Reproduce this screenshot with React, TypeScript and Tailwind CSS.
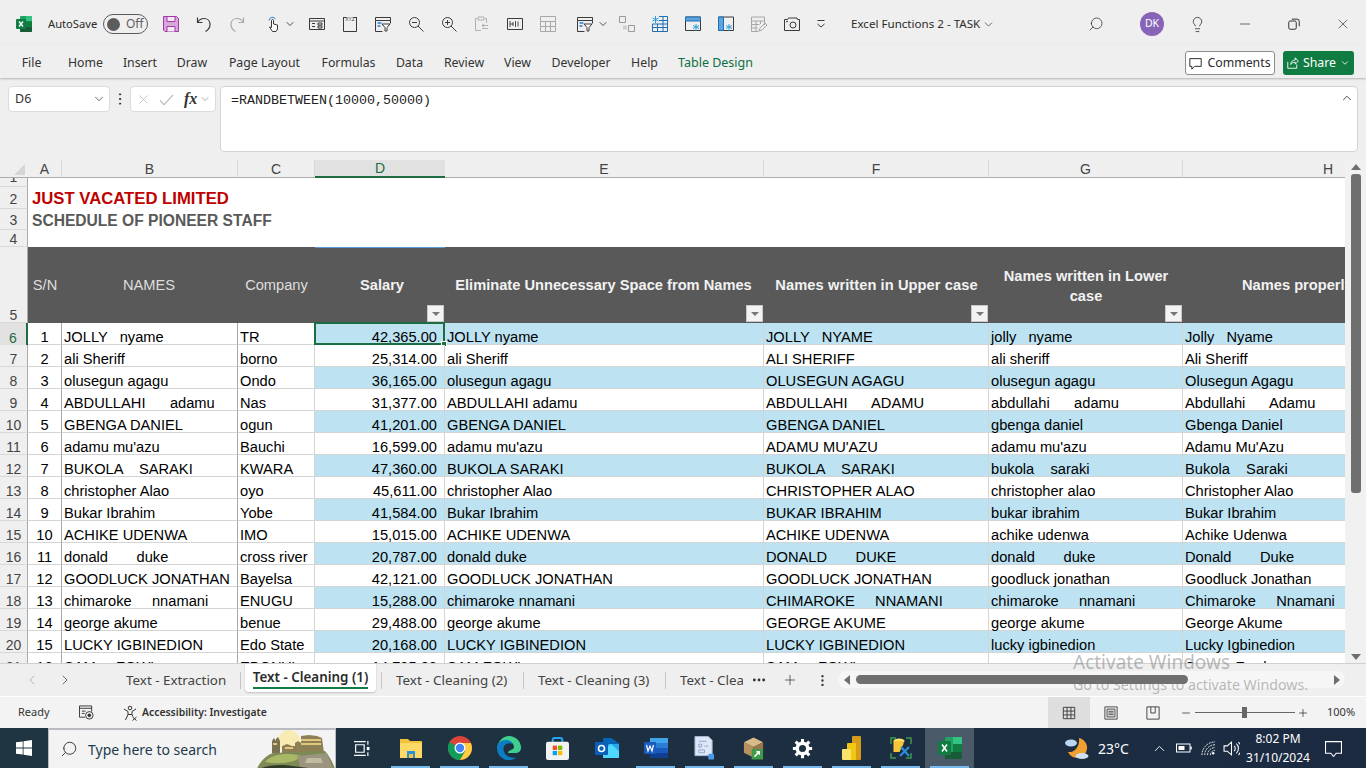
import { ReactNode } from "react";
import {
  ChevronDown,
  ChevronLeft,
  ChevronRight,
  ChevronUp,
  Lightbulb,
  Minus,
  MoreHorizontal,
  MoreVertical,
  Plus,
  Search,
  X,
} from "lucide-react";

const GRID_COLS = "grid grid-cols-[28px_34px_176px_77px_130px_319px_225px_194px_162px]";

const MENU = [
  { label: "File", w: "w-[45px]" },
  { label: "Home", w: "w-[63px]" },
  { label: "Insert", w: "w-[46px]" },
  { label: "Draw", w: "w-[58px]" },
  { label: "Page Layout", w: "w-[87px]" },
  { label: "Formulas", w: "w-[81px]" },
  { label: "Data", w: "w-[41px]" },
  { label: "Review", w: "w-[68px]" },
  { label: "View", w: "w-[39px]" },
  { label: "Developer", w: "w-[88px]" },
  { label: "Help", w: "w-[39px]" },
];

const ROWS: [string, string, string][] = [
  ["JOLLY   nyame", "TR", "42,365.00"],
  ["ali Sheriff", "borno", "25,314.00"],
  ["olusegun agagu", "Ondo", "36,165.00"],
  ["ABDULLAHI      adamu", "Nas", "31,377.00"],
  ["GBENGA DANIEL", "ogun", "41,201.00"],
  ["adamu mu'azu", "Bauchi", "16,599.00"],
  ["BUKOLA    SARAKI", "KWARA", "47,360.00"],
  ["christopher Alao", "oyo", "45,611.00"],
  ["Bukar Ibrahim", "Yobe", "41,584.00"],
  ["ACHIKE UDENWA", "IMO", "15,015.00"],
  ["donald       duke", "cross river", "20,787.00"],
  ["GOODLUCK JONATHAN", "Bayelsa", "42,121.00"],
  ["chimaroke     nnamani", "ENUGU", "15,288.00"],
  ["george akume", "benue", "29,488.00"],
  ["LUCKY IGBINEDION", "Edo State", "20,168.00"],
  ["SAM     FOWL", "EBONYI", "14,795.00"],
];

const proper = (s: string) =>
  s.toLowerCase().replace(/[a-z]+/g, (w) => w[0].toUpperCase() + w.slice(1));

function Ico({ children, className = "" }: { children: ReactNode; className?: string }) {
  return (
    <svg
      viewBox="0 0 16 16"
      fill="none"
      stroke="currentColor"
      strokeWidth="1"
      className={`w-4 h-4 shrink-0 ${className}`}
    >
      {children}
    </svg>
  );
}

function ExcelLogo() {
  return (
    <svg viewBox="0 0 16 16" className="w-4 h-4 shrink-0">
      <rect x="4" y="0" width="12" height="16" rx="1" fill="#21a366" />
      <rect x="10" y="0" width="6" height="5.3" fill="#33c481" />
      <rect x="10" y="5.3" width="6" height="5.4" fill="#107c41" />
      <rect x="4" y="10.7" width="12" height="5.3" rx="1" fill="#185c37" />
      <rect x="0" y="3" width="10" height="10" rx="1" fill="#107c41" />
      <path d="M3 5.5l4 5M7 5.5l-4 5" stroke="#fff" strokeWidth="1.4" />
    </svg>
  );
}

function FilterIcon() {
  return (
    <Ico>
      <path d="M.5 1.5h15v3H.5zM.5 4.5v11h7M15.500 4.500v3" />
      <path d="M7 8h8l-3 3.500v3.500h-2v-3.500z" fill="#fff" />
      <path d="M2.500 7h4M2.500 10h3" stroke="#2b7cd3" strokeWidth="1.500" />
    </Ico>
  );
}

function QuickAccess() {
  return (
    <div className="flex items-center gap-[17px] text-[#3a3a3a]">
      <Ico className="text-[#a13aa8]">
        <path d="M.5.5h13l2 2v13H2l-1.500-1.500z" fill="#d6a7d8" />
        <path d="M4 .5h8v5H4zM4 15.500v-5h8v5" fill="#f4e8f5" />
      </Ico>
      <Ico>
        <path d="M1.500 1.500v5h5M1.500 6.500C3 4 5 2.500 8 2.500c3.500 0 6 2.500 6 6 0 3-2 5.500-4.500 7" strokeWidth="1.200" />
      </Ico>
      <Ico className="text-[#a8a8a8]">
        <path d="M14.500 1.500v5h-5M14.500 6.500C13 4 11 2.500 8 2.500c-3.500 0-6 2.500-6 6 0 3 2 5.500 4.500 7" strokeWidth="1.200" />
      </Ico>
      <div className="ml-[4px] -mr-[4px] flex items-center gap-[2px]">
        <Ico>
          <path d="M3 4.500a3.500 3.500 0 0 1 6.500-1.500" stroke="#2b7cd3" />
          <path d="M5.500 10V4.500a1 1 0 0 1 2 0V8l4 1v4l-1.500 2.500H6.500L3.500 11l2 .5z" fill="#fff" />
        </Ico>
        <ChevronDown className="w-3 h-3" strokeWidth={1.75} />
      </div>
      <Ico>
        <path d="M.5 2.500h15v11H.5zM.5 5h15M3 7.500h3M3 10.500h3M9 7h4v2H9zM9 10h4v2H9z" />
      </Ico>
      <Ico>
        <path d="M1.500 1.500h3M11.500 1.500h3M1.500 1v14.500h13V1" />
        <text x="8" y="5" fontSize="5" textAnchor="middle" fill="currentColor" stroke="none" fontFamily="Liberation Sans">
          XYZ
        </text>
      </Ico>
      <FilterIcon />
      <Ico>
        <circle cx="6.500" cy="6.500" r="5" />
        <path d="M10 10l5.500 5.500M4 6.500h5" />
      </Ico>
      <Ico>
        <circle cx="6.500" cy="6.500" r="5" />
        <path d="M10 10l5.500 5.500M4 6.500h5M6.500 4v5" />
      </Ico>
      <Ico className="text-[#b0b0b0]">
        <path d="M3 2.500H1.500v12H7M11 2.500h1.500V7M4 1h6v3H4zM8 9.500h6M8 12.500h6M10 8l-2 1.500 2 1.500" />
      </Ico>
      <Ico>
        <path d="M.5 2.500h15v11H.5z" />
        <path d="M3 5v6M3 8h3.500M6 6v4M8.500 5v6M11 5.500v5" strokeWidth=".9" />
      </Ico>
      <Ico className="text-[#a8a8a8]">
        <path d="M.5.500h15v15H.5zM.5 5.500h15M.5 10.500h15M5.500 5.500v10M10.500 5.500v10" />
      </Ico>
      <div className="ml-[4px] -mr-[7px] flex items-center gap-[4px]">
        <FilterIcon />
        <ChevronDown className="w-3 h-3" strokeWidth={1.75} />
      </div>
      <Ico className="text-[#9a9a9a]">
        <path d="M.5.500h6v6h-6zM9.500 9.500h6v6h-6z" />
        <path d="M4 9.500h4v4H4z" fill="#d0d0d0" stroke="none" />
      </Ico>
      <Ico className="text-[#1f6fb5]">
        <path d="M.5 8h15v7.500H.5zM7 .5h8.500v15M7 4.500h8.500M11 .5v15M.5 11.500h15M5.500 8v7.500" />
        <path d="M3.500 0v7M.5 2l6 3M6.500 2l-6 3" stroke="#2b9ee0" />
      </Ico>
      <Ico className="text-[#3a3a3a]">
        <path d="M.5 1h15v13.500H.5z" />
        <path d="M.5 1h15v4H.5z" fill="#5ba3dc" stroke="#1f6fb5" />
        <path d="M11 8v7M8 9.500l6 3M14 9.500l-6 3" stroke="#2b9ee0" />
      </Ico>
      <Ico className="text-[#3a3a3a]">
        <path d="M.5 1h15v13.500H.5z" />
        <path d="M.5 1h5v13.500h-5z" fill="#5ba3dc" stroke="#1f6fb5" />
        <path d="M11 8v7M8 9.500l6 3M14 9.500l-6 3" stroke="#2b9ee0" />
      </Ico>
      <Ico className="text-[#a8a8a8]">
        <path d="M.5 1h13v8M.5 1v14.500h7M.5 5h13M.5 8.500h8M.5 12h6M5 5v10.500M9.500 5v3" />
        <path d="M8 15l1-3 5-5 2 2-5 5z" />
      </Ico>
      <Ico>
        <path d="M.5 3.500h3l1-1.500h8.500l.5 1.500h2v11H.5z" />
        <circle cx="9" cy="9" r="3" />
        <circle cx="3" cy="5.500" r=".5" />
      </Ico>
      <Ico className="-ml-[4px]">
        <path d="M4.500 4.500h7M4.500 8l3.500 3 3.500-3" />
      </Ico>
    </div>
  );
}

function TitleBar() {
  return (
    <div className="h-[44px] flex items-center pl-4 pt-[4px] text-[#2b2b2b]">
      <ExcelLogo />
      <span className="ml-4 w-[55px] text-[11.2px]">AutoSave</span>
      <div className="w-[45px] h-[20px] rounded-full border border-[#5c5c5c] flex items-center pl-[3px] gap-[6px] text-[12px] text-[#5f5f5f]">
        <span className="w-[13px] h-[13px] rounded-full bg-[#5c5c5c]" />
        Off
      </div>
      <div className="ml-[15px] w-[688px]">
        <QuickAccess />
      </div>
      <span className="w-[131px] text-[11.6px] whitespace-nowrap">Excel Functions 2 - TASK</span>
      <ChevronDown className="w-[13px] h-[13px]" strokeWidth={1.25} />
      <Search className="ml-[93px] w-[16px] h-[16px] -scale-x-100" strokeWidth={1.1} />
      <span className="ml-[36px] w-6 h-6 rounded-full bg-[#8764b8] text-white text-[10.5px] flex items-center justify-center">
        DK
      </span>
      <Lightbulb className="ml-[25px] w-[17px] h-[17px]" strokeWidth={1.1} />
      <Minus className="ml-[31px] w-[16px] h-[16px]" strokeWidth={1} />
      <Ico className="ml-[35px] w-[12px] h-[12px]">
        <rect x="1" y="4" width="10" height="11" rx="2" strokeWidth="1.300" />
        <path d="M5 1.500h7a3 3 0 0 1 3 3V11" strokeWidth="1.300" />
      </Ico>
      <X className="ml-[35px] w-[16px] h-[16px]" strokeWidth={1} />
    </div>
  );
}

function MenuBar() {
  return (
    <div className="h-[34px] flex items-center pl-[9px] pt-[4px] text-[12.3px] text-[#333] shadow-[0_1px_2px_rgba(0,0,0,0.25)] relative z-10">
      {MENU.map((m) => (
        <span key={m.label} className={`${m.w} text-center whitespace-nowrap`}>
          {m.label}
        </span>
      ))}
      <span className="ml-[14px] whitespace-nowrap text-[12.5px] text-[#0e703f]">Table Design</span>
      <div className="ml-auto flex items-center gap-2 pr-[12px]">
        <button className="w-[90px] h-[24px] rounded-[3px] border border-[#8c8c8c] bg-white flex items-center justify-center gap-[5px] text-[12.3px] text-[#2b2b2b]">
          <Ico className="w-[13px] h-[13px]">
            <path d="M1 2h14v9.500H7L3.500 15v-3.500H1z" strokeWidth="1.200" />
          </Ico>
          Comments
        </button>
        <button className="w-[71px] h-[24px] rounded-[3px] bg-[#107c41] flex items-center justify-center gap-[4px] text-[12.3px] text-white">
          <Ico className="w-[12px] h-[12px]">
            <path d="M1 6.500v8.500h12v-5M5 10c0-4 3-6 6-6V1l4 4.500-4 4V7c-3 0-5 1-6 3z" strokeWidth="1.200" />
          </Ico>
          Share
          <ChevronDown className="w-[10px] h-[10px]" strokeWidth={2} />
        </button>
      </div>
    </div>
  );
}

function FormulaBar() {
  return (
    <div className="h-[82px] flex items-start pt-[8px] pl-2 pr-2">
      <div className="w-[102px] h-[26px] bg-white border border-[#dcdcdc] rounded-[4px] flex items-center justify-between pl-[6px] pr-[3px] text-[12.5px] text-[#333]">
        D6
        <ChevronDown className="w-[14px] h-[14px]" strokeWidth={1.25} />
      </div>
      <MoreVertical className="mt-[5px] mx-[2px] w-4 h-4 text-[#333]" strokeWidth={1.5} />
      <div className="w-[86px] h-[26px] bg-white border border-[#dcdcdc] rounded-[4px] flex items-center pl-[5px] text-[#b5b5b5]">
        <X className="w-[15px] h-[15px]" strokeWidth={1.1} />
        <svg viewBox="0 0 16 16" className="ml-[8px] w-[15px] h-[15px]" fill="none" stroke="currentColor" strokeWidth="1.100">
          <path d="M1 9l4.500 4.500L15 3" />
        </svg>
        <span className="ml-[10px] font-['Liberation_Serif',serif] italic font-bold text-[16px] text-[#333]">fx</span>
        <ChevronDown className="ml-[2px] w-[12px] h-[12px] text-[#777]" strokeWidth={1.25} />
      </div>
      <div className="ml-[4px] flex-1 h-[66px] bg-white border border-[#d4d4d4] rounded-[4px] flex items-start justify-between pl-[10px] pr-[3px] pt-[4px]">
        <span className="font-['Liberation_Mono',monospace] text-[13.33px] text-[#222]">=RANDBETWEEN(10000,50000)</span>
        <ChevronUp className="w-[14px] h-[14px] text-[#333]" strokeWidth={1.5} />
      </div>
    </div>
  );
}

function ColumnHeaders() {
  const letters = ["A", "B", "C", "D", "E", "F", "G"];
  return (
    <div className={`${GRID_COLS} h-[18px] text-[14px] leading-[16px]`}>
      <div className="flex items-end justify-end pr-[3px] pb-[2px] border-b border-[#ababab]">
        <span className="w-0 h-0 border-l-[11px] border-l-transparent border-b-[11px] border-b-[#d6d6d6]" />
      </div>
      {letters.map((l) => (
        <div
          key={l}
          className={
            l === "D"
              ? "flex items-center justify-center bg-[#e1e1e1] border-b-2 border-b-[#1e6c41] text-[#1e6c41]"
              : "flex items-center justify-center border-r border-b border-r-[#d8d8d8] border-b-[#ababab] text-[#444]"
          }
        >
          {l}
        </div>
      ))}
      <div className="flex items-center justify-end pr-[12px] border-b border-[#ababab] text-[#444]">H</div>
    </div>
  );
}

function RowLabel({ n, active, lift }: { n: number; active?: boolean; lift?: boolean }) {
  return (
    <div
      className={
        active
          ? "flex items-end justify-center overflow-hidden bg-[#e1e1e1] border-r-2 border-[#1e6c41] text-[14px] leading-[14px] text-[#1e6c41]"
          : `flex items-end justify-center overflow-hidden bg-[#efefef] border-r border-b border-r-[#ababab] border-b-[#d8d8d8] text-[14px] leading-[14px] text-[#444] ${lift ? "pb-[2px]" : ""}`
      }
    >
      {n}
    </div>
  );
}

function FilterButton() {
  return (
    <span className="absolute right-[1px] bottom-[1px] w-[17px] h-[17px] bg-[#f3f3f3] border border-[#c8c8c8] flex items-center justify-center">
      <span className="w-0 h-0 border-x-[4px] border-x-transparent border-t-[4px] border-t-[#777]" />
    </span>
  );
}

function HeaderRow() {
  return (
    <div className={`${GRID_COLS} h-[76px] text-[14.67px] text-[#f2f2f2]`}>
      <RowLabel n={5} />
      <div className="bg-[#595959] flex items-center justify-center text-[#dedede]">S/N</div>
      <div className="bg-[#595959] flex items-center justify-center text-[#dedede] pr-[2px]">NAMES</div>
      <div className="bg-[#595959] flex items-center justify-center text-[#dedede]">Company</div>
      <div className="relative bg-[#595959] border-t border-[#5b9bd5] flex items-center justify-center font-bold pl-[4px] pb-[1px]">
        Salary
        <FilterButton />
      </div>
      <div className="relative bg-[#595959] flex items-center justify-center font-bold pr-[2px] whitespace-nowrap">
        Eliminate Unnecessary Space from Names
        <FilterButton />
      </div>
      <div className="relative bg-[#595959] flex items-center justify-center font-bold whitespace-nowrap tracking-[0.07px]">
        Names written in Upper case
        <FilterButton />
      </div>
      <div className="relative bg-[#595959] flex items-center justify-center text-center font-bold leading-[20px] px-1 pt-[2px]">
        Names written in Lower case
        <FilterButton />
      </div>
      <div className="bg-[#595959] flex items-center pl-[59px] font-bold whitespace-nowrap overflow-hidden">
        Names properly written
      </div>
    </div>
  );
}

function DataRow({ idx, raw, company, salary }: { idx: number; raw: string; company: string; salary: string }) {
  const band = idx % 2 === 0;
  const fill = band ? "bg-[#bde3f3]" : "bg-white";
  const last = idx === 15;
  const plain = "flex items-end whitespace-pre pl-[2px] border-b";
  return (
    <div className={`${GRID_COLS} h-[22px] text-[14.67px] leading-[14px] text-black`}>
      <RowLabel n={idx + 6} active={idx === 0} />
      <div className="flex items-end justify-center bg-white border-r border-b border-r-[#a8a8a8] border-b-[#d4d4d4]">{idx + 1}</div>
      <div className={`${plain} bg-white border-r border-r-[#a8a8a8] border-b-[#d4d4d4]`}>{raw}</div>
      <div className={`${plain} bg-white border-r border-r-[#d4d4d4] border-b-[#d4d4d4]`}>{company}</div>
      <div className={`relative flex items-end justify-end pr-[7px] border-r border-b border-r-[#d4d4d4] border-b-[#d4d4d4] ${fill}`}>
        {salary}
        {idx === 0 && (
          <span className="absolute -left-[1px] -top-[1px] -right-[1px] -bottom-[1px] border-2 border-[#1e6c41]">
            <span className="absolute -right-[4px] -bottom-[4px] w-[6px] h-[6px] bg-[#1e6c41] border border-white" />
          </span>
        )}
      </div>
      <div className={`${plain} ${fill} border-r border-r-[#d4d4d4] border-b-[#d4d4d4]`}>{raw.replace(/\s+/g, " ")}</div>
      <div className={`${plain} ${fill} border-r border-r-[#d4d4d4] border-b-[#d4d4d4]`}>{raw.toUpperCase()}</div>
      <div className={`${plain} ${fill} border-r border-r-[#d4d4d4] border-b-[#d4d4d4]`}>{last ? "" : raw.toLowerCase()}</div>
      <div className={`${plain} ${fill} border-b-[#d4d4d4]`}>{proper(raw)}</div>
    </div>
  );
}

function Sheet() {
  return (
    <div className="h-[504px] flex border-b border-[#d0d0d0] overflow-hidden">
      <div className="w-[1345px] shrink-0 overflow-hidden font-['Liberation_Sans',sans-serif]">
        <ColumnHeaders />
        <div className={`${GRID_COLS} h-[9px]`}>
          <RowLabel n={1} lift />
          <div className="col-span-8 bg-white" />
        </div>
        <div className={`${GRID_COLS} h-[22px]`}>
          <RowLabel n={2} lift />
          <div className="col-span-8 bg-white pl-[4px] flex items-end text-[16.7px] leading-[20px] font-bold text-[#c00000]">JUST VACATED LIMITED</div>
        </div>
        <div className={`${GRID_COLS} h-[21px]`}>
          <RowLabel n={3} lift />
          <div className="col-span-8 bg-white pl-[4px] flex items-end text-[15.6px] leading-[19px] font-bold text-[#595959]">SCHEDULE OF PIONEER STAFF</div>
        </div>
        <div className={`${GRID_COLS} h-[17px]`}>
          <RowLabel n={4} />
          <div className="col-span-8 bg-white" />
        </div>
        <HeaderRow />
        {ROWS.map((r, i) => (
          <DataRow key={i} idx={i} raw={r[0]} company={r[1]} salary={r[2]} />
        ))}
      </div>
      <div className="flex-1 bg-[#f1f1f1] flex flex-col items-center pt-[4px]">
        <span className="w-0 h-0 border-x-[5px] border-x-transparent border-b-[6px] border-b-[#6f6f6f]" />
        <span className="mt-[4px] w-[10px] h-[319px] rounded-[3px] bg-[#6f6f6f]" />
        <span className="mt-auto mb-[3px] w-0 h-0 border-x-[5px] border-x-transparent border-t-[6px] border-t-[#6f6f6f]" />
      </div>
    </div>
  );
}

function SheetTabs() {
  const sep = <span className="w-px h-[17px] bg-[#c4c4c4]" />;
  const tab = "text-[13.4px] text-[#444] whitespace-nowrap";
  return (
    <div className="h-[32px] flex items-start relative">
      <div className="w-[126px] h-full flex items-center pl-[24px] gap-[17px] text-[#555]">
        <ChevronLeft className="w-4 h-4 text-[#a8a8a8]" strokeWidth={1.25} />
        <ChevronRight className="w-4 h-4" strokeWidth={1.25} />
      </div>
      <div className="h-full flex items-center gap-[14px]">
        <span className={`${tab} w-[100px]`}>Text - Extraction</span>
        {sep}
      </div>
      <div className="ml-[4px] w-[131px] h-[28px] bg-white rounded-b-[4px] shadow-[0_1px_2px_rgba(0,0,0,0.2)] flex flex-col items-center">
        <span className="mt-[4px] text-[13.4px] leading-[18px] font-semibold text-[#2b2b2b] whitespace-nowrap">Text - Cleaning (1)</span>
        <span className="mt-[1px] w-[115px] h-[2px] bg-[#107c41]" />
      </div>
      <div className="ml-[5px] h-full flex items-center gap-[14px]">
        {sep}
        <span className={`${tab} w-[113px]`}>Text - Cleaning (2)</span>
        {sep}
        <span className={`${tab} w-[113px]`}>Text - Cleaning (3)</span>
        {sep}
        <span className={`${tab} w-[63px] overflow-hidden`}>Text - Cleaning (4)</span>
      </div>
      <div className="h-full flex items-center text-[#333]">
        <MoreHorizontal className="ml-[8px] w-[16px] h-[16px]" strokeWidth={2.25} />
        <Plus className="ml-[15px] w-[16px] h-[16px]" strokeWidth={1.1} />
        <MoreVertical className="ml-[17px] w-[15px] h-[15px]" strokeWidth={1.75} />
      </div>
      <div className="ml-[8px] mt-[7px] w-[507px] h-[17px] rounded-full bg-[#f6f6f6] flex items-center px-[4px]">
        <span className="ml-[2px] w-0 h-0 border-y-[5px] border-y-transparent border-r-[6px] border-r-[#6f6f6f]" />
        <span className="ml-[6px] w-[332px] h-[9px] rounded-full bg-[#6f6f6f]" />
        <span className="ml-auto mr-[1px] w-0 h-0 border-y-[5px] border-y-transparent border-l-[6px] border-l-[#6f6f6f]" />
      </div>
    </div>
  );
}

function StatusBar() {
  return (
    <div className="h-[32px] bg-[#f3f3f3] border-t border-white flex items-center pl-[18px] text-[11px] text-[#333]">
      <span className="w-[61px]">Ready</span>
      <Ico className="w-[15px] h-[15px]">
        <path d="M.5 1h13v6M.5 1v12h6M.5 3.500h13M3 6.500h4M3 9h3" />
        <circle cx="11" cy="11" r="4" />
        <circle cx="11" cy="11" r="1.500" fill="currentColor" />
      </Ico>
      <Ico className="ml-[29px] w-[16px] h-[16px]">
        <circle cx="7" cy="3" r="1.800" />
        <path d="M1 4l4 2.500v3L2.500 15M13 4L9 6.500v3l1 2M5 9.500h4M9.500 12l4 3.500M13.500 12l-4 3.500" />
      </Ico>
      <span className="ml-[3px] text-[10.4px] font-semibold text-[#333] whitespace-nowrap">Accessibility: Investigate</span>
      <div className="ml-auto h-full flex items-center">
        <div className="w-[42px] h-full bg-[#dedede] flex items-center justify-center">
          <Ico className="w-[14px] h-[14px]">
            <path d="M.5.5h13v13H.5zM.5 4.800h13M.5 9.200h13M4.800.5v13M9.200.5v13" transform="translate(1 1)" />
          </Ico>
        </div>
        <div className="w-[42px] flex justify-center">
          <Ico className="w-[14px] h-[14px]">
            <path d="M1 1h14v14H1zM3.500 3.500h9v9h-9zM5 6h6M5 8h6M5 10h6" />
          </Ico>
        </div>
        <div className="w-[42px] flex justify-center">
          <Ico className="w-[14px] h-[14px]">
            <path d="M1 1h14v14H1zM5.500 1v7h5V1" />
          </Ico>
        </div>
        <Minus className="ml-[6px] w-[12px] h-[12px]" strokeWidth={1.5} />
        <div className="ml-[3px] w-[100px] h-[1px] bg-[#666] relative">
          <span className="absolute left-[47px] -top-[5px] w-[5px] h-[11px] bg-[#666]" />
        </div>
        <Plus className="ml-[2px] w-[12px] h-[12px]" strokeWidth={1.5} />
        <span className="ml-[18px] w-[39px]">100%</span>
      </div>
    </div>
  );
}

function TaskIcon({ children, on, active }: { children: ReactNode; on?: boolean; active?: boolean }) {
  return (
    <div className={`w-[49px] h-full relative flex items-center justify-center ${active ? "bg-[#4a5a68]" : ""}`}>
      {children}
      {on && <span className="absolute bottom-0 left-[5px] right-[5px] h-[2px] bg-[#76b9ed]" />}
    </div>
  );
}

function Castle() {
  return (
    <svg viewBox="0 0 78 40" className="ml-auto w-[78px] h-[40px] shrink-0">
      <circle cx="32" cy="12" r="11" fill="#f8ecb4" />
      <path d="M15 24V12l2-3 2 3v-2l2-2 2 4v12z" fill="#7b7152" />
      <path d="M25 24v-7l5-2 5 2h3v-3l3-2 3 2V7l8-1 8 1 5 2 2 15z" fill="#8d8055" />
      <path d="M44 10h20v2H44zM44 14h20v2H44zM28 18h8v2h-8zM16 14h4v2h-4z" fill="#e2c67c" />
      <path d="M0 40C3 32 10 26 16 24l52-2c5 6 8 12 10 18z" fill="#7d8a55" />
      <path d="M8 33c6-8 24-10 36-6-4 6-20 9-36 6z" fill="#a9b865" />
      <path d="M40 27l30-3 6 16H44z" fill="#9b947e" />
      <path d="M50 29h14l2 5H48z" fill="#c2bba2" />
      <path d="M2 40c8-4 23-5 33-3l25 3z" fill="#2f3a28" />
    </svg>
  );
}

function ExcelIconLarge() {
  return (
    <svg viewBox="0 0 24 24" className="w-[24px] h-[24px]">
      <rect x="7" y="1" width="17" height="22" rx="1" fill="#21a366" />
      <rect x="15" y="1" width="9" height="7" fill="#33c481" />
      <rect x="15" y="8" width="9" height="8" fill="#107c41" />
      <rect x="7" y="16" width="17" height="7" fill="#185c37" />
      <rect y="5" width="13" height="14" rx="1" fill="#107c41" />
      <path d="M4 8.500l5 7M9 8.500l-5 7" stroke="#fff" strokeWidth="1.600" />
    </svg>
  );
}

function Taskbar() {
  return (
    <div className="h-[40px] flex bg-linear-to-r from-[#1f3541] to-[#1b2a41] text-white">
      <div className="w-[48px] flex items-center justify-center">
        <svg viewBox="0 0 16 16" className="w-4 h-4" fill="#fff">
          <path d="M0 2.300l6.700-.9v6.200H0zM7.500 1.300L16 0v7.600H7.500zM0 8.400h6.700v6.200L0 13.700zM7.500 8.400H16V16l-8.500-1.200z" />
        </svg>
      </div>
      <div className="w-[288px] bg-[#f3f3f3] border-t-2 border-x border-[#b8bcc0] flex items-center pl-[11px] text-[#333]">
        <Search className="w-[18px] h-[18px] -scale-x-100" strokeWidth={1.25} />
        <span className="ml-[10px] text-[14px] text-[#1f3a4d] whitespace-nowrap">Type here to search</span>
        <Castle />
      </div>
      <div className="ml-[1px] flex items-center h-full">
        <TaskIcon>
          <Ico className="w-[17px] h-[17px]">
            <path d="M1 1.500h11M1 14.500h11M2.500 4.500h8v7h-8zM14 1v3.500M14 11.500V15" strokeWidth="1.100" />
            <rect x="13" y="6.500" width="2.500" height="3" fill="#fff" stroke="none" />
          </Ico>
        </TaskIcon>
        <TaskIcon on>
          <svg viewBox="0 0 22 20" className="w-[22px] h-[20px]">
            <path d="M0 1h8l2 2h12v17H0z" fill="#f5c33b" />
            <path d="M0 5h22v15H0z" fill="#ffd966" />
            <path d="M7 13h8v7h-2v-4H9v4H7z" fill="#2b8fdc" />
            <path d="M9 16h4v4H9z" fill="#f5c33b" />
          </svg>
        </TaskIcon>
        <TaskIcon on>
          <svg viewBox="0 0 24 24" className="w-[24px] h-[24px]">
            <circle cx="12" cy="12" r="12" fill="#db4437" />
            <path d="M12 12L1.600 6A12 12 0 0 0 12 24l5-9z" fill="#0f9d58" />
            <path d="M12 7h10.900A12 12 0 0 1 12 24l5.200-9z" fill="#ffcd40" />
            <circle cx="12" cy="12" r="5.500" fill="#fff" />
            <circle cx="12" cy="12" r="4.200" fill="#4285f4" />
          </svg>
        </TaskIcon>
        <TaskIcon on>
          <svg viewBox="0 0 24 24" className="w-[24px] h-[24px]">
            <path d="M12 0a12 12 0 0 1 12 12c0 3-2.500 5-5.500 5H11c1-4 6-3 6-6 0-3-3-6-7-6-5 0-9 3-10 7C1 5 6 0 12 0z" fill="#3ecf8e" />
            <path d="M0 12c0-5 4-8 9-8 4 0 6 2 6.500 4-4-2-9 0-9 5 0 5 5 10 13 8.500A12 12 0 0 1 0 12z" fill="#0c7cc4" />
          </svg>
        </TaskIcon>
        <TaskIcon>
          <svg viewBox="0 0 24 24" className="w-[23px] h-[23px]">
            <path d="M7 6V3a2 2 0 0 1 2-2h6a2 2 0 0 1 2 2v3" fill="none" stroke="#22a7f0" strokeWidth="2" />
            <rect y="5" width="24" height="19" rx="2" fill="#f2f2f2" />
            <rect x="7" y="9" width="4.500" height="4.500" fill="#f25022" />
            <rect x="12.500" y="9" width="4.500" height="4.500" fill="#7fba00" />
            <rect x="7" y="14.500" width="4.500" height="4.500" fill="#00a4ef" />
            <rect x="12.500" y="14.500" width="4.500" height="4.500" fill="#ffb900" />
          </svg>
        </TaskIcon>
        <TaskIcon>
          <svg viewBox="0 0 24 24" className="w-[24px] h-[24px]">
            <path d="M8 2h8l8 6v12a2 2 0 0 1-2 2H8z" fill="#28a8ea" />
            <path d="M8 2h8v6H8zM16 2l8 6h-8z" fill="#0364b8" />
            <path d="M8 15l8-7 8 7v7H8z" fill="#50d9ff" />
            <rect y="6" width="13" height="13" rx="1" fill="#0a5fb8" />
            <circle cx="6.500" cy="12.500" r="3" fill="none" stroke="#fff" strokeWidth="1.600" />
          </svg>
        </TaskIcon>
        <TaskIcon on>
          <svg viewBox="0 0 24 24" className="w-[24px] h-[24px]">
            <rect x="6" y="2" width="18" height="20" rx="1" fill="#2b7cd3" />
            <rect x="6" y="2" width="18" height="5" fill="#41a5ee" />
            <rect x="6" y="12" width="18" height="5" fill="#185abd" />
            <rect x="6" y="17" width="18" height="5" fill="#103f91" />
            <rect y="6" width="12" height="12" rx="1" fill="#185abd" />
            <path d="M2.500 9l1.500 6 2-5 2 5 1.500-6" fill="none" stroke="#fff" strokeWidth="1.200" />
          </svg>
        </TaskIcon>
        <TaskIcon on>
          <svg viewBox="0 0 22 24" className="w-[21px] h-[24px]">
            <path d="M1 0h14l4 4v16H1z" fill="#dfe7f5" stroke="#a9b8d8" />
            <path d="M5 5h8M5 8h3v3H5zM11 10h4M5 14h6v3H5z" fill="none" stroke="#8ea6d6" />
            <rect x="15" y="18" width="6" height="6" rx="1" fill="#4b9be8" />
          </svg>
        </TaskIcon>
        <TaskIcon on>
          <svg viewBox="0 0 24 24" className="w-[23px] h-[24px]">
            <path d="M2 6l10-5 10 5-10 5z" fill="#d9bb8a" />
            <path d="M2 6v11l10 5V11z" fill="#b8925c" />
            <path d="M22 6v11l-10 5V11z" fill="#9a7748" />
            <rect x="10" y="13" width="12" height="11" fill="#3f9b49" />
            <path d="M13 21l5-5M15 16h3v3" fill="none" stroke="#fff" strokeWidth="1.500" />
          </svg>
        </TaskIcon>
        <TaskIcon on>
          <svg viewBox="0 0 24 24" className="w-[21px] h-[21px]" fill="none" stroke="#fff">
            <circle cx="12" cy="12" r="6" strokeWidth="4" />
            <path d="M12 1v4M12 19v4M1 12h4M19 12h4M4.200 4.200l3 3M16.800 16.800l3 3M4.200 19.800l3-3M16.800 7.200l3-3" strokeWidth="3.500" />
          </svg>
        </TaskIcon>
        <TaskIcon on>
          <svg viewBox="0 0 20 24" className="w-[20px] h-[24px]">
            <rect x="10" y="0" width="9" height="24" rx="1" fill="#d69b1a" />
            <rect x="5" y="7" width="9" height="17" rx="1" fill="#f2c811" />
            <rect x="0" y="13" width="9" height="11" rx="1" fill="#fbe26d" />
          </svg>
        </TaskIcon>
        <TaskIcon on>
          <svg viewBox="0 0 24 24" className="w-[24px] h-[24px]" fill="none">
            <path d="M2 8V2h5M17 2h5v6M2 17v5h5M17 22h5v-5" stroke="#3c9a48" strokeWidth="1.500" />
            <ellipse cx="10" cy="5" rx="5.500" ry="2.500" fill="#ffe169" />
            <path d="M4.500 5v11h6l4-8V5z" fill="#f5c53a" />
            <path d="M11 20l9-9M12 11l8 9" stroke="#2b8fdc" strokeWidth="2" />
          </svg>
        </TaskIcon>
        <TaskIcon on active>
          <ExcelIconLarge />
        </TaskIcon>
      </div>
      <div className="ml-auto flex items-center">
        <svg viewBox="0 0 24 24" className="w-[24px] h-[24px]">
          <path d="M14 2a10 10 0 1 1-11 14c6 1 12-5 11-14z" fill="#f0a030" />
          <ellipse cx="6" cy="7" rx="6" ry="3.500" fill="#bcd6f2" />
          <ellipse cx="17" cy="20" rx="6.500" ry="3" fill="#cfe0f4" />
        </svg>
        <span className="ml-[9px] w-[32px] text-[14px]">23°C</span>
        <ChevronUp className="ml-[21px] w-[17px] h-[17px]" strokeWidth={1.25} />
        <Ico className="ml-[8px] w-[16px] h-[16px]">
          <rect x=".5" y="4" width="13.500" height="8" />
          <rect x="2.500" y="6" width="6" height="4" fill="#fff" stroke="none" />
          <path d="M15 6.500v3" strokeWidth="1.500" />
        </Ico>
        <Ico className="ml-[9px] w-[15px] h-[15px]">
          <path d="M1 15A14 14 0 0 1 15 1M4 15A11 11 0 0 1 15 4M7 15a8 8 0 0 1 8-8M10 15a5 5 0 0 1 5-5" strokeDasharray="2 1" />
          <circle cx="13" cy="13" r="1.300" fill="#fff" stroke="none" />
        </Ico>
        <Ico className="ml-[7px] w-[17px] h-[17px]">
          <path d="M1 5.500h3l4-3.500v12L4 10.500H1zM10.500 5.500a3.500 3.500 0 0 1 0 5M12.500 3.500a6 6 0 0 1 0 9M14.500 2a8 8 0 0 1 0 12" />
        </Ico>
        <div className="ml-[9px] w-[58px] flex flex-col items-center text-[12px] leading-[19px] whitespace-nowrap">
          <span>8:02 PM</span>
          <span>31/10/2024</span>
        </div>
        <div className="w-[59px] flex justify-center pr-[7px]">
          <Ico className="w-[17px] h-[17px]">
            <path d="M.5 1.500h15v11h-5L8 15.500 5.500 12.500h-5z" />
          </Ico>
        </div>
      </div>
    </div>
  );
}

export default function App() {
  return (
    <div className="relative w-[1366px] h-[768px] overflow-hidden flex flex-col bg-[#efefef] font-['Noto_Sans',sans-serif]">
      <TitleBar />
      <MenuBar />
      <FormulaBar />
      <Sheet />
      <SheetTabs />
      <StatusBar />
      <Taskbar />
      {/* Windows activation watermark sits over the sheet */}
      <div className="absolute left-[1073px] top-[648px] text-[#7a7a7a]/50 pointer-events-none whitespace-nowrap">
        <div className="text-[19px] leading-[28px]">Activate Windows</div>
        <div className="text-[14.2px] leading-[20px] -mt-[1px]">Go to Settings to activate Windows.</div>
      </div>
    </div>
  );
}
